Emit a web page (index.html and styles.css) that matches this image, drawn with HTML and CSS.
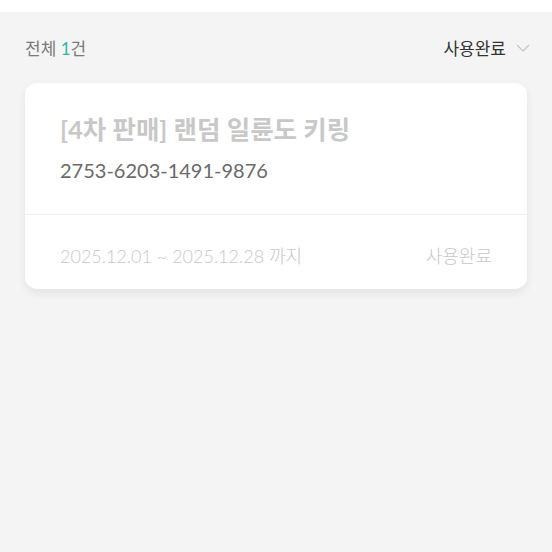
FILE: index.html
```html
<!DOCTYPE html>
<html lang="ko">
<head>
<meta charset="utf-8">
<link rel="stylesheet" href="styles.css">
</head>
<body>
<div class="topbar"></div>
<main class="page">
  <div class="head">
    <div class="total">전체 <span class="count">1</span>건</div>
    <div class="filter">사용완료
      <svg class="chev" width="14" height="8" viewBox="0 0 14 8"><path d="M1 1 L7 7 L13 1" fill="none" stroke="#c4c4c4" stroke-width="1.2"/></svg>
    </div>
  </div>
  <div class="card">
    <div class="card-body">
      <div class="title">[4차 판매] 랜덤 일륜도 키링</div>
      <div class="code">2753-6203-1491-9876</div>
    </div>
    <div class="card-foot">
      <div class="period">2025.12.01 ~ 2025.12.28 까지</div>
      <div class="status">사용완료</div>
    </div>
  </div>
</main>
</body>
</html>
```

FILE: styles.css
```css
html, body { margin: 0; padding: 0; }
body {
  width: 552px;
  height: 552px;
  background: #f4f4f5;
  font-family: Lato, "Noto Sans CJK KR", sans-serif;
  overflow: hidden;
}
.topbar { height: 12px; background: #ffffff; }
.page { padding: 0 25px; }
.head {
  display: flex;
  justify-content: space-between;
  align-items: center;
  height: 71px;
}
.total { font-size: 17px; color: #7a7a7a; }
.count { color: #2bb8a8; }
.filter {
  display: flex;
  align-items: center;
  gap: 10px;
  font-size: 17px;
  color: #333;
  margin-right: -3px;
}
.chev { margin-top: 1px; }
.card {
  background: #fff;
  border-radius: 12px;
  box-shadow: 0 4px 10px rgba(0,0,0,0.07);
}
.card-body {
  padding: 29px 35px 0;
  height: 132px;
  box-sizing: border-box;
  border-bottom: 1px solid #f1f1f1;
}
.title {
  font-size: 25.5px;
  font-weight: 700;
  color: #c8c8c8;
  line-height: 34px;
}
.code {
  font-size: 20px;
  color: #6a6a6a;
  line-height: 28px;
  margin-top: 10px;
}
.card-foot {
  display: flex;
  justify-content: space-between;
  align-items: center;
  height: 74px;
  box-sizing: border-box;
  padding: 5px 35px 0;
  font-size: 18px;
  font-weight: 300;
  color: #c8c8c8;
}
```
